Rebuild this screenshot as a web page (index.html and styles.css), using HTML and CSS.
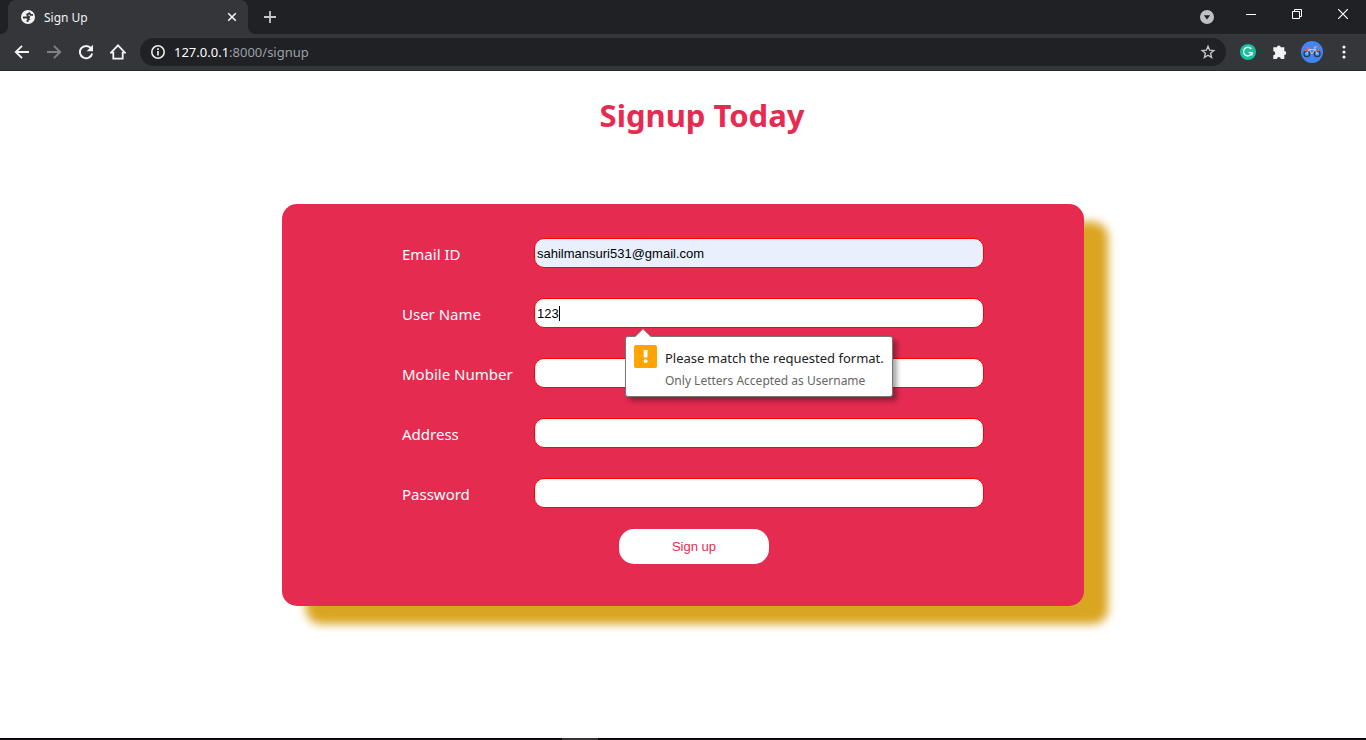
FILE: index.html
```html
<!DOCTYPE html>
<html lang="en">
<head>
<meta charset="utf-8">
<title>Sign Up</title>
<link rel="stylesheet" href="styles.css">
</head>
<body>
<header class="browser">
  <div class="tab-strip">
    <div class="tab">
      <svg width="16" height="16" viewBox="0 0 16 16"><circle cx="8" cy="8" r="7" fill="#f1f3f4"/><path d="M13 5.800H10.500L9.500 4.200 7.200 5.500 7.800 7.300 10 8.300M3 8.500h4l2 1.700-1.500 1.200v1.600" fill="none" stroke="#35363a" stroke-width="1.800"/></svg>
      <span class="tab-title">Sign Up</span>
      <button class="plain" aria-label="Close tab"><svg width="10" height="10" viewBox="0 0 10 10"><path d="M1.200 1.200l7.600 7.600M8.800 1.200l-7.600 7.600" stroke="#f1f3f4" stroke-width="1.600"/></svg></button>
    </div>
    <button class="plain new-tab" aria-label="New tab"><svg width="12" height="12" viewBox="0 0 12 12"><path d="M6 0v12M0 6h12" stroke="#c4c7cb" stroke-width="1.800"/></svg></button>
    <div class="window-controls">
      <button class="plain" aria-label="Search tabs"><svg width="14" height="14" viewBox="0 0 14 14"><circle cx="7" cy="7" r="7" fill="#bdc1c6"/><path d="M3.800 5.200h6.400L7 9.400z" fill="#202124"/></svg></button>
      <button class="plain raised" aria-label="Minimize"><svg width="10" height="10" viewBox="0 0 10 10"><path d="M0 5.500h10" stroke="#fff"/></svg></button>
      <button class="plain raised" aria-label="Restore"><svg width="10" height="10" viewBox="0 0 10 10" fill="none" stroke="#fff"><path d="M.5 2.500h7v7h-7zM2.500 2.500v-2h7v7h-2"/></svg></button>
      <button class="plain raised" aria-label="Close window"><svg width="10" height="10" viewBox="0 0 10 10"><path d="M0 0l10 10M10 0L0 10" stroke="#fff" stroke-width="1.200"/></svg></button>
    </div>
  </div>
  <div class="toolbar">
    <button class="plain tool" aria-label="Back"><svg width="16" height="16" viewBox="0 0 16 16" fill="none" stroke="#f1f3f4" stroke-width="1.900"><path d="M15 8H2.500M8 1.800L1.800 8 8 14.200"/></svg></button>
    <button class="plain tool" aria-label="Forward"><svg width="16" height="16" viewBox="0 0 16 16" fill="none" stroke="#808286" stroke-width="1.900"><path d="M1 8h12.500M8 1.800L14.200 8 8 14.200"/></svg></button>
    <button class="plain tool" aria-label="Reload"><svg width="16" height="16" viewBox="0 0 16 16"><path d="M13 4.200A6.200 6.200 0 1 0 14.200 9.500" fill="none" stroke="#f1f3f4" stroke-width="2"/><path d="M15 .8v6.400H8.600z" fill="#f1f3f4"/></svg></button>
    <button class="plain tool" aria-label="Home"><svg width="16" height="16" viewBox="0 0 16 16" fill="none" stroke="#f1f3f4" stroke-width="1.800"><path d="M1 8.700L8 1.400l7 7.300h-2.300v6H3.300v-6z"/></svg></button>
    <div class="address-bar">
      <svg width="16" height="16" viewBox="0 0 16 16"><circle cx="8" cy="8" r="6.200" fill="none" stroke="#e8eaed" stroke-width="1.600"/><path d="M8 7v4.500M8 4.300v1.600" stroke="#e8eaed" stroke-width="1.700"/></svg>
      <span class="url"><b>127.0.0.1</b>:8000/signup</span>
      <button class="plain tool" aria-label="Bookmark"><svg width="16" height="16" viewBox="0 0 16 16"><path d="M8 2.300l1.600 3.900 4.200.3-3.200 2.800 1 4.100L8 11.200l-3.600 2.200 1-4.100-3.200-2.800 4.200-.3z" fill="none" stroke="#c4c7cb" stroke-width="1.400"/></svg></button>
    </div>
    <div class="extensions">
      <button class="plain tool" aria-label="Writing assistant"><svg width="16" height="16" viewBox="0 0 16 16"><circle cx="8" cy="8" r="8" fill="#15c39a"/><path d="M11.300 5A4.300 4.300 0 1 0 12 8.600H8.600M12 8.600v3" fill="none" stroke="#fff" stroke-width="1.300"/></svg></button>
      <button class="plain tool" aria-label="Extensions"><svg width="16" height="16" viewBox="0 0 16 16"><path d="M1.300 3.300H4.900a1.900 1.900 0 0 1 3.800 0h3.600V7a1.900 1.900 0 0 1 0 3.900V15H8.800a1.900 1.900 0 0 0-3.800 0H1.300v-3.800a1.900 1.900 0 0 0 0-3.900z" fill="#f1f3f4"/></svg></button>
      <button class="plain profile" aria-label="Profile"><svg width="22" height="22" viewBox="0 0 22 22"><circle cx="11" cy="11" r="11" fill="#4285f4"/><g fill="#6ea0f0" stroke="#2b3a55" stroke-width="1.500"><circle cx="5.800" cy="12.800" r="2.800"/><circle cx="16.200" cy="12.800" r="2.800"/></g><path d="M5.800 12.800L8 8.200l2.800 4.800 3.400-4.500L16.200 12.800M8 8.500h6" fill="none" stroke="#c3c8d2"/><path d="M14.300 9l-.8-3h3.200" fill="none" stroke="#c3c8d2"/><path d="M5.500 7h3.500M15 6.200h2.200" stroke="#f0653d" stroke-width="1.600"/><path d="M3.500 9.600h3M15.500 9.600h3" stroke="#f0653d" stroke-width="1.400"/></svg></button>
      <button class="plain tool" aria-label="Menu"><svg width="4" height="14" viewBox="0 0 4 14" fill="#f1f3f4"><circle cx="2" cy="2" r="1.600"/><circle cx="2" cy="7" r="1.600"/><circle cx="2" cy="12" r="1.600"/></svg></button>
    </div>
  </div>
</header>

<main class="page">
  <h1 class="heading">Signup Today</h1>
  <form class="card">
    <label class="label" for="email">Email ID</label>
    <div class="field"><input class="box autofilled" id="email" type="email" value="sahilmansuri531@gmail.com"></div>
    <label class="label" for="username">User Name</label>
    <div class="field">
      <input class="box" id="username" type="text" value="123" aria-describedby="username-error">
      <span class="caret"></span>
      <div class="bubble" id="username-error" role="alert">
        <svg class="bubble-tip" width="18" height="9" viewBox="0 0 18 9"><path d="M0 9V8l1 0 8-8 8 8h1v1z" fill="#fff"/><path d="M0 7.500h1L9 .3l8 7.200h1" fill="none" stroke="#777" stroke-width=".6"/></svg>
        <svg width="23" height="23" viewBox="0 0 23 23"><rect width="23" height="23" rx="2" fill="#ffa400"/><path d="M9.700 5h3.800v7.500H9.700z" fill="#fff"/><circle cx="11.600" cy="16.200" r="1.900" fill="#fff"/></svg>
        <div class="bubble-text">
          <p class="bubble-title">Please match the requested format.</p>
          <p class="bubble-detail">Only Letters Accepted as Username</p>
        </div>
      </div>
    </div>
    <label class="label" for="mobile">Mobile Number</label>
    <div class="field"><input class="box" id="mobile" type="tel"></div>
    <label class="label" for="address">Address</label>
    <div class="field"><input class="box" id="address" type="text"></div>
    <label class="label" for="password">Password</label>
    <div class="field"><input class="box" id="password" type="password"></div>
    <button class="submit" type="button">Sign up</button>
  </form>
</main>
<footer class="taskbar"><span class="taskbar-app"></span></footer>
</body>
</html>
```

FILE: styles.css
```css
* { box-sizing: border-box; }

body {
  display: flex;
  flex-direction: column;
  min-height: 100vh;
  margin: 0;
  background: #fff;
  font-family: "Noto Sans", "Open Sans", sans-serif;
}

.plain {
  display: flex;
  align-items: center;
  justify-content: center;
  padding: 0;
  border: 0;
  background: none;
}

.browser {
  border-bottom: 1px solid #28292c;
  background: #35363a;
  color: #f1f3f4;
}

.tab-strip {
  display: flex;
  align-items: center;
  height: 34px;
  padding-left: 8px;
  background: #202124;
}

.tab {
  display: flex;
  align-items: center;
  gap: 8px;
  position: relative;
  width: 240px;
  height: 34px;
  padding: 0 11px 0 12px;
  border-radius: 8px 8px 0 0;
  background: #35363a;
}

.tab::before,
.tab::after {
  content: "";
  position: absolute;
  bottom: 0;
  width: 8px;
  height: 8px;
}

.tab::before {
  left: -8px;
  background: radial-gradient(circle at 0 0, #202124 8px, #35363a 8px);
}

.tab::after {
  right: -8px;
  background: radial-gradient(circle at 100% 0, #202124 8px, #35363a 8px);
}

.tab-title {
  flex: 1;
  font-size: 12px;
}

.new-tab { margin-left: 16px; }

.window-controls {
  display: flex;
  align-items: center;
  gap: 36px;
  margin-left: auto;
  padding-right: 18px;
}

.raised { padding-bottom: 6px; }

.raised:nth-child(2) { margin-left: -4px; }

.toolbar {
  display: flex;
  align-items: center;
  gap: 14px;
  height: 36px;
  padding: 0 14px;
}

.tool {
  width: 16px;
  height: 16px;
}

.tool + .tool { margin-left: 2px; }

.address-bar {
  display: flex;
  flex: 1;
  align-items: center;
  gap: 8px;
  height: 28px;
  padding: 0 10px;
  border-radius: 14px;
  background: #202124;
}

.url {
  flex: 1;
  color: #9aa0a6;
  font-size: 13px;
}

.url b {
  color: #fff;
  font-weight: 400;
}

.extensions {
  display: flex;
  align-items: center;
  gap: 14px;
}

.profile { margin: 0 -1px; }

.page {
  flex: 1;
  padding: 22px 16px 0;
}

.heading {
  margin: 0 0 67px;
  padding-left: 38px;
  color: #e52b50;
  font-size: 31px;
  line-height: 44px;
  text-align: center;
}

.card {
  display: grid;
  grid-template-columns: 132px 1fr;
  row-gap: 30px;
  align-items: center;
  max-width: 802px;
  margin: 0 auto;
  padding: 34px 100px 42px 120px;
  border-radius: 15px;
  background: #e52b50;
  box-shadow: 24px 18px 10px goldenrod;
  color: #fff;
}

.label {
  padding-top: 2px;
  font-size: 15px;
  line-height: 20px;
}

.field { position: relative; }

.box {
  display: block;
  width: 100%;
  height: 30px;
  padding: 0 2px;
  border: 1px solid red;
  border-radius: 10px;
  outline: 0;
  background: #fff;
  color: #000;
  font: 13px "Liberation Sans", Arial, sans-serif;
}

.autofilled { background: #e8f0fe; }

.caret {
  position: absolute;
  top: 8px;
  left: 25px;
  width: 1px;
  height: 15px;
  background: #000;
}

.bubble {
  display: flex;
  gap: 8px;
  position: absolute;
  z-index: 1;
  top: 38px;
  left: 91px;
  padding: 8px 8px 5px;
  border: 1px solid #777;
  border-radius: 3px;
  background: #fff;
  box-shadow: 4px 4px 5px rgba(0, 0, 0, .35);
  white-space: nowrap;
}

.bubble-tip {
  position: absolute;
  top: -8px;
  left: 8px;
}

.bubble-text {
  padding-top: 3px;
}

.bubble-text p {
  margin: 0;
  line-height: 20px;
}

.bubble-text .bubble-title {
  margin-bottom: 3px;
  color: #222;
  font-size: 13px;
}

.bubble-text .bubble-detail {
  color: #666;
  font-size: 12px;
}

.submit {
  grid-column: 1 / -1;
  justify-self: center;
  width: 150px;
  height: 35px;
  margin: -9px 0 0 2px;
  border: 0;
  border-radius: 15px;
  background: #fff;
  color: #e52b50;
  font: 13px "Liberation Sans", Arial, sans-serif;
}

.taskbar {
  display: flex;
  height: 2px;
  background: #0b0609;
}

.taskbar-app {
  width: 36px;
  margin-left: 562px;
  background: #383436;
}
```
